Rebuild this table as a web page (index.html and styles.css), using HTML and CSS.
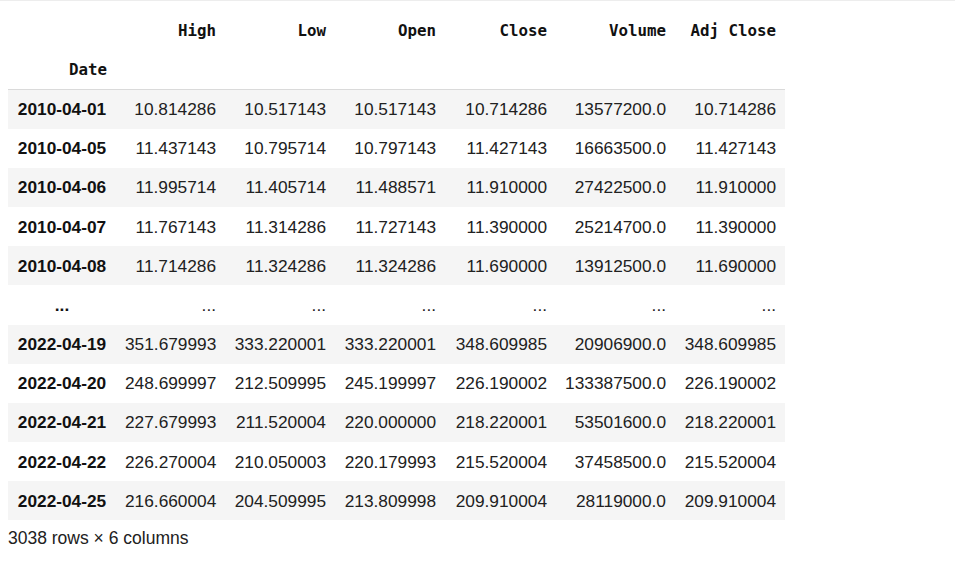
FILE: index.html
```html
<!DOCTYPE html>
<html>
<head>
<meta charset="utf-8">
<link rel="stylesheet" href="styles.css">
</head>
<body>
<div class="topline"></div>
<div class="output">
<table class="df">
<colgroup>
<col class="c-idx"><col class="c-n"><col class="c-n2"><col class="c-n2"><col class="c-n3"><col class="c-vol"><col class="c-n2">
</colgroup>
<thead>
<tr><th></th><th>High</th><th>Low</th><th>Open</th><th>Close</th><th>Volume</th><th>Adj Close</th></tr>
<tr><th>Date</th><th></th><th></th><th></th><th></th><th></th><th></th></tr>
</thead>
<tbody>
<tr><th>2010-04-01</th><td>10.814286</td><td>10.517143</td><td>10.517143</td><td>10.714286</td><td>13577200.0</td><td>10.714286</td></tr>
<tr><th>2010-04-05</th><td>11.437143</td><td>10.795714</td><td>10.797143</td><td>11.427143</td><td>16663500.0</td><td>11.427143</td></tr>
<tr><th>2010-04-06</th><td>11.995714</td><td>11.405714</td><td>11.488571</td><td>11.910000</td><td>27422500.0</td><td>11.910000</td></tr>
<tr><th>2010-04-07</th><td>11.767143</td><td>11.314286</td><td>11.727143</td><td>11.390000</td><td>25214700.0</td><td>11.390000</td></tr>
<tr><th>2010-04-08</th><td>11.714286</td><td>11.324286</td><td>11.324286</td><td>11.690000</td><td>13912500.0</td><td>11.690000</td></tr>
<tr><th>...</th><td>...</td><td>...</td><td>...</td><td>...</td><td>...</td><td>...</td></tr>
<tr><th>2022-04-19</th><td>351.679993</td><td>333.220001</td><td>333.220001</td><td>348.609985</td><td>20906900.0</td><td>348.609985</td></tr>
<tr><th>2022-04-20</th><td>248.699997</td><td>212.509995</td><td>245.199997</td><td>226.190002</td><td>133387500.0</td><td>226.190002</td></tr>
<tr><th>2022-04-21</th><td>227.679993</td><td>211.520004</td><td>220.000000</td><td>218.220001</td><td>53501600.0</td><td>218.220001</td></tr>
<tr><th>2022-04-22</th><td>226.270004</td><td>210.050003</td><td>220.179993</td><td>215.520004</td><td>37458500.0</td><td>215.520004</td></tr>
<tr><th>2022-04-25</th><td>216.660004</td><td>204.509995</td><td>213.809998</td><td>209.910004</td><td>28119000.0</td><td>209.910004</td></tr>
</tbody>
</table>
<p class="caption">3038 rows × 6 columns</p>
</div>
</body>
</html>
```
FILE: styles.css
```css
html, body {
  margin: 0;
  padding: 0;
  background: #ffffff;
}
.topline {
  height: 1px;
  background: #ededed;
}
.output {
  padding: 10px 0 0 8px;
  font-family: "Liberation Sans", Arial, sans-serif;
  color: #212121;
}
.df {
  border-collapse: collapse;
  border-spacing: 0;
  table-layout: fixed;
  width: 777px;
  font-size: 17.3px;
}
.c-idx { width: 108px; }
.c-n { width: 109px; }
.c-n2 { width: 110px; }
.c-n3 { width: 111px; }
.c-vol { width: 119px; }
.df th, .df td {
  height: 39.2px;
  padding: 0 9px;
  box-sizing: border-box;
  text-align: right;
  vertical-align: middle;
  white-space: nowrap;
  line-height: 20px;
}
.df thead th {
  font-family: "DejaVu Sans Mono", "Liberation Mono", monospace;
  font-weight: bold;
  font-size: 15.8px;
  color: #111;
}
.df thead tr:last-child th {
  border-bottom: 1px solid #dadada;
}
.df tbody th {
  text-align: center;
  font-weight: bold;
  color: #111;
}
.df tbody tr:nth-child(odd) {
  background: #f5f5f5;
}
.caption {
  margin: 8px 0 0 0;
  font-size: 17.5px;
  line-height: 20px;
}
```
